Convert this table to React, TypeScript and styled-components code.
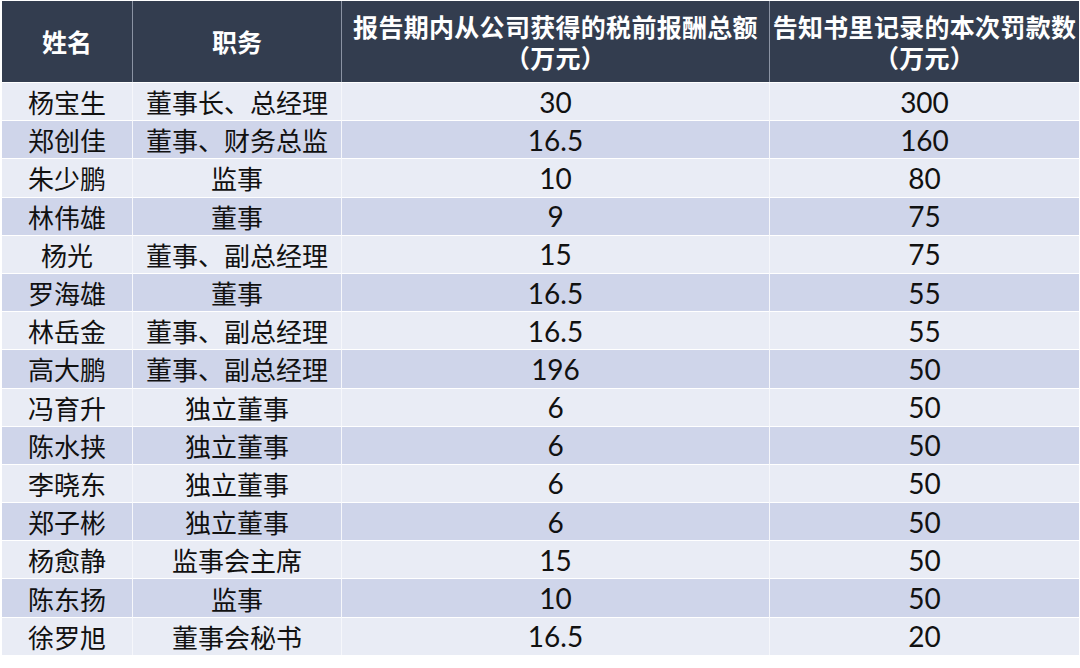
import styled, { createGlobalStyle } from "styled-components";

const rows = [
    ["杨宝生", "董事长、总经理", "30", "300"],
    ["郑创佳", "董事、财务总监", "16.5", "160"],
    ["朱少鹏", "监事", "10", "80"],
    ["林伟雄", "董事", "9", "75"],
    ["杨光", "董事、副总经理", "15", "75"],
    ["罗海雄", "董事", "16.5", "55"],
    ["林岳金", "董事、副总经理", "16.5", "55"],
    ["高大鹏", "董事、副总经理", "196", "50"],
    ["冯育升", "独立董事", "6", "50"],
    ["陈水挟", "独立董事", "6", "50"],
    ["李晓东", "独立董事", "6", "50"],
    ["郑子彬", "独立董事", "6", "50"],
    ["杨愈静", "监事会主席", "15", "50"],
    ["陈东扬", "监事", "10", "50"],
    ["徐罗旭", "董事会秘书", "16.5", "20"],
];

const GlobalStyle = createGlobalStyle`
    html, body {
        margin: 0;
        padding: 0;
        background: #ffffff;
    }
    body {
        font-family: "Lato", "Noto Sans CJK SC", sans-serif;
    }
`;

export default function App() {
    return (
        <>
            <GlobalStyle />
            <Page>
                <Table>
                    <HeadCell>姓名</HeadCell>
                    <HeadCell>职务</HeadCell>
                    <HeadCell>
                        <HeadLine>报告期内从公司获得的税前报酬总额</HeadLine>
                        <HeadLine>（万元）</HeadLine>
                    </HeadCell>
                    <HeadCell $last>
                        <HeadLine>告知书里记录的本次罚款数</HeadLine>
                        <HeadLine>（万元）</HeadLine>
                    </HeadCell>

                    {rows.map((row, i) =>
                        row.map((text, j) => (
                            <Cell
                                key={`${i}-${j}`}
                                $dark={i % 2 === 1}
                                $num={j >= 2}
                                $last={j === 3}
                            >
                                {text}
                            </Cell>
                        ))
                    )}
                </Table>
            </Page>
        </>
    );
}

/* ======= Styled Components ======= */

const Page = styled.div`
    padding: 1px 1px 0 2px;
`;

const Table = styled.div`
    display: grid;
    grid-template-columns: 131px 209px 428px 1fr;
    grid-template-rows: 81px repeat(15, 38.2px);
`;

const HeadCell = styled.div<{ $last?: boolean }>`
    display: flex;
    flex-direction: column;
    align-items: center;
    justify-content: center;
    text-align: center;
    background: #333d4f;
    color: #ffffff;
    font-family: "Noto Sans CJK SC", sans-serif;
    font-weight: bold;
    font-size: 25px;
    line-height: 31px;
    border-right: ${(p) => (p.$last ? "none" : "1px solid #8b93a3")};
    white-space: nowrap;
`;

const HeadLine = styled.span`
    display: block;
    height: 31px;
    letter-spacing: 0.3px;
`;

const Cell = styled.div<{ $dark: boolean; $num: boolean; $last: boolean }>`
    display: flex;
    align-items: center;
    justify-content: center;
    background: ${(p) => (p.$dark ? "#cfd5ea" : "#e9ecf5")};
    color: #111111;
    font-size: ${(p) => (p.$num ? "28px" : "26px")};
    border-top: 1px solid #ffffff;
    border-right: ${(p) => (p.$last ? "none" : "1px solid #f6f7fb")};
    white-space: nowrap;
`;
